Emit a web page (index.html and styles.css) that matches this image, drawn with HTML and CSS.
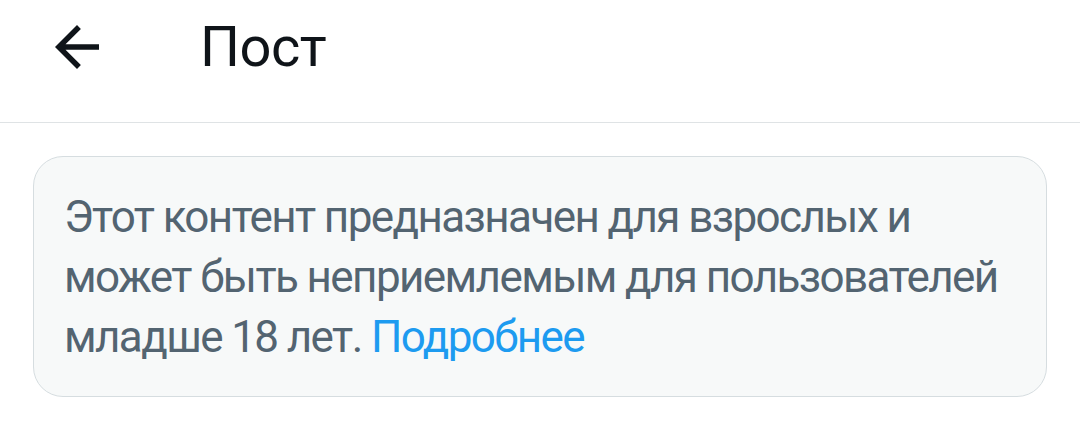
FILE: index.html
```html
<!DOCTYPE html>
<html lang="ru">
<head>
<meta charset="utf-8">
<link rel="stylesheet" href="styles.css">
</head>
<body>
<header class="topbar">
  <button class="back" aria-label="Назад">
    <svg viewBox="0 0 24 24" width="66" height="66"><path d="M20 11H7.83l5.59-5.59L12 4l-8 8 8 8 1.41-1.41L7.83 13H20v-2z" fill="#0f1419"/></svg>
  </button>
  <h1 class="title">Пост</h1>
</header>
<main class="content">
  <div class="notice">
    <p class="notice-text">Этот контент предназначен для взрослых и может быть неприемлемым для пользователей младше 18 лет. <a class="more" href="#">Подробнее</a></p>
  </div>
</main>
</body>
</html>
```

FILE: styles.css
```css
html, body {
  margin: 0;
  padding: 0;
  background: #ffffff;
  font-family: Roboto, "Noto Sans", sans-serif;
}
.topbar {
  height: 122px;
  display: flex;
  align-items: center;
  border-bottom: 1px solid #dfe3e5;
}
.back {
  margin-left: 44px;
  margin-top: -28px;
  padding: 0;
  border: 0;
  background: none;
  width: 66px;
  height: 66px;
  display: flex;
}
.title {
  margin: -28px 0 0 90px;
  font-size: 56px;
  font-weight: 400;
  color: #0f1419;
  line-height: 66px;
  letter-spacing: -0.5px;
}
.content {
  padding: 33px 33px 0 33px;
}
.notice {
  background: #f7f9f9;
  border: 1px solid #d6dde0;
  border-radius: 30px;
  padding: 30px 30px 29px 30px;
}
.notice-text {
  margin: 0;
  font-size: 44px;
  line-height: 60px;
  color: #536471;
  letter-spacing: -1.6px;
}
.more {
  color: #1d9bf0;
  text-decoration: none;
}
```
